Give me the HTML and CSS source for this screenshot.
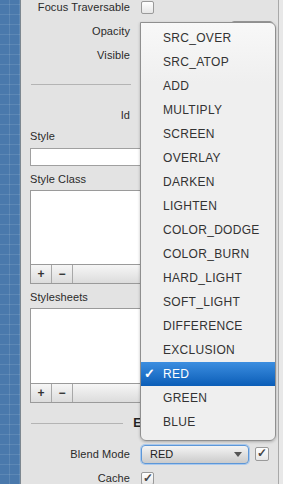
FILE: index.html
```html
<!DOCTYPE html>
<html lang="en">
<head>
    <meta charset="UTF-8">
    <meta name="viewport" content="width=device-width, initial-scale=1.0">
    <title>Inspector - Blend Mode</title>
    <link rel="stylesheet" href="styles.css">
</head>
<body>
    <div class="stage">
        <div class="canvas"></div>
        <div class="inspector">
            <div class="inspector-body">
                <div class="prop-row">
                    <span class="prop-label">Focus Traversable</span>
                    <span class="check"></span>
                </div>
                <div class="prop-row">
                    <span class="prop-label">Opacity</span>
                    <div class="opacity-control">
                        <span class="slider"></span>
                        <span class="small-field"></span>
                    </div>
                </div>
                <div class="prop-row">
                    <span class="prop-label">Visible</span>
                    <span class="check checked">&#10003;</span>
                </div>
                <div class="section-title first">
                    <span class="rule rule-left"></span>
                    <span class="title-gap"></span>
                    <span class="rule"></span>
                </div>
                <div class="prop-row">
                    <span class="prop-label">Id</span>
                    <span class="text-field"></span>
                </div>
                <div class="field-block">
                    <div class="block-label">Style</div>
                    <div class="text-field wide"></div>
                </div>
                <div class="field-block">
                    <div class="block-label">Style Class</div>
                    <div class="list-box"></div>
                    <div class="list-bar">
                        <span class="bar-btn">+</span>
                        <span class="bar-btn">&minus;</span>
                    </div>
                </div>
                <div class="field-block">
                    <div class="block-label">Stylesheets</div>
                    <div class="list-box tall"></div>
                    <div class="list-bar">
                        <span class="bar-btn">+</span>
                        <span class="bar-btn">&minus;</span>
                    </div>
                </div>
                <div class="section-title extras">
                    <span class="rule"></span>
                    <span class="title">Extras</span>
                    <span class="rule"></span>
                </div>
                <div class="prop-row">
                    <span class="prop-label">Blend Mode</span>
                    <div class="blend-control">
                        <div class="combo">
                            <span>RED</span>
                            <span class="combo-arrow"></span>
                        </div>
                        <span class="check checked">&#10003;</span>
                    </div>
                </div>
                <div class="prop-row">
                    <span class="prop-label">Cache</span>
                    <span class="check checked">&#10003;</span>
                </div>
            </div>
        </div>
        <div class="scroll-edge"></div>

        <ul class="popup">
            <li>SRC_OVER</li>
            <li>SRC_ATOP</li>
            <li>ADD</li>
            <li>MULTIPLY</li>
            <li>SCREEN</li>
            <li>OVERLAY</li>
            <li>DARKEN</li>
            <li>LIGHTEN</li>
            <li>COLOR_DODGE</li>
            <li>COLOR_BURN</li>
            <li>HARD_LIGHT</li>
            <li>SOFT_LIGHT</li>
            <li>DIFFERENCE</li>
            <li>EXCLUSION</li>
            <li class="selected"><span class="tick">&#10003;</span>RED</li>
            <li>GREEN</li>
            <li>BLUE</li>
        </ul>
    </div>
</body>
</html>
```

FILE: styles.css
```css
body {
    margin: 0;
    font-family: "Liberation Sans", Arial, sans-serif;
    font-size: 11px;
    color: #2a2a2a;
    overflow: hidden;
}
.stage {
    position: relative;
    display: flex;
    width: 283px;
    height: 484px;
    overflow: hidden;
    background-color: #e3e3e3;
}
.canvas {
    width: 20px;
    border-right: 1px solid #7d8790;
    background-color: #4a79ac;
    background-image:
        linear-gradient(rgba(255, 255, 255, 0.1) 1px, transparent 1px),
        linear-gradient(90deg, rgba(255, 255, 255, 0.1) 1px, transparent 1px);
    background-size: 10px 10px;
    background-position: 9px 4px;
}
.inspector {
    flex: 1;
    overflow: hidden;
}
.inspector-body {
    margin-top: -5px; /* scrolled a little */
    padding: 0 5px 0 9px;
}
.scroll-edge {
    width: 4px;
    border-left: 1px solid #a9a9a9;
    background-color: #e8e8e8;
}
.prop-row {
    display: grid;
    grid-template-columns: 100px 1fr;
    column-gap: 11px;
    align-items: center;
    height: 24px;
}
.prop-label {
    text-align: right;
    letter-spacing: 0.1px;
}
.check {
    width: 11px;
    height: 11px;
    border: 1px solid #9a9a9a;
    border-radius: 2px;
    background: linear-gradient(#ffffff, #e6e6e6);
    font-size: 12px;
    line-height: 11px;
    text-align: center;
    color: #444;
    font-weight: bold;
}
.opacity-control {
    display: flex;
    align-items: center;
    gap: 6px;
}
.slider {
    flex: 1;
    height: 3px;
    background-color: #bbb;
}
.small-field {
    width: 40px;
    height: 18px;
    border: 1px solid #999;
    border-radius: 3px;
    background-color: #fff;
}
.text-field {
    height: 16px;
    border: 1px solid #a0a0a0;
    background-color: #fff;
}
.section-title {
    display: flex;
    align-items: center;
    gap: 10px;
    height: 14px;
}
.section-title.first {
    margin: 10px 0 12px;
}
.section-title.first .rule-left {
    flex: none;
    width: 100px;
}
.title-gap {
    width: 60px;
}
.section-title.extras {
    margin: 13px 0 12px;
}
.rule {
    flex: 1;
    height: 1px;
    margin-left: 1px;
    background-color: #b4b4b4;
}
.title {
    font-weight: bold;
    font-size: 12px;
    color: #222;
}
.field-block {
    display: flex;
    flex-direction: column;
}
.block-label {
    height: 14px;
    line-height: 14px;
    margin-top: 2px;
    letter-spacing: 0.1px;
}
.field-block + .field-block .block-label {
    margin-top: 6px;
}
.text-field.wide {
    margin-top: 5px;
}
.list-box {
    margin-top: 4px;
    height: 73px;
    border: 1px solid #9a9a9a;
    border-bottom: none;
    background-color: #fff;
}
.list-box.tall {
    height: 74px;
}
.list-bar {
    display: flex;
    height: 18px;
    border: 1px solid #9a9a9a;
    background: linear-gradient(#f6f6f6, #dcdcdc);
}
.bar-btn {
    width: 20px;
    border-right: 1px solid #a8a8a8;
    text-align: center;
    line-height: 18px;
    font-size: 12px;
    font-weight: bold;
    color: #333;
}
.blend-control {
    display: flex;
    align-items: center;
    gap: 6px;
}
.combo {
    display: flex;
    align-items: center;
    justify-content: space-between;
    width: 92px;
    height: 17px;
    padding: 0 6px 0 8px;
    border: 1px solid #5d97d8;
    border-radius: 4px;
    box-shadow: 0 0 0 1px #a9c9ee;
    background: linear-gradient(#f4f4f4, #cbcbcb);
    font-size: 11px;
    color: #222;
}
.combo-arrow {
    width: 0;
    height: 0;
    border-left: 4px solid transparent;
    border-right: 4px solid transparent;
    border-top: 5px solid #555;
}
.blend-control .check {
    width: 12px;
    height: 12px;
}
.popup {
    position: absolute;
    left: 140px;
    top: 22px;
    width: 134px;
    margin: 0;
    padding: 3px 0 6px;
    list-style: none;
    border: 1px solid #8f8f8f;
    border-radius: 0 6px 6px 6px;
    background: linear-gradient(#f8f8f8, #efefef 60px);
    box-shadow: 0 1px 3px rgba(0, 0, 0, 0.25);
}
.popup li {
    position: relative;
    height: 24px;
    line-height: 24px;
    padding-left: 22px;
    font-size: 12px;
    letter-spacing: 0.3px;
    color: #333;
}
.popup li.selected {
    background: linear-gradient(#3c8ee0, #0b5db7);
    color: #fff;
}
.tick {
    position: absolute;
    left: 3px;
    font-size: 13px;
    font-weight: bold;
}
```
